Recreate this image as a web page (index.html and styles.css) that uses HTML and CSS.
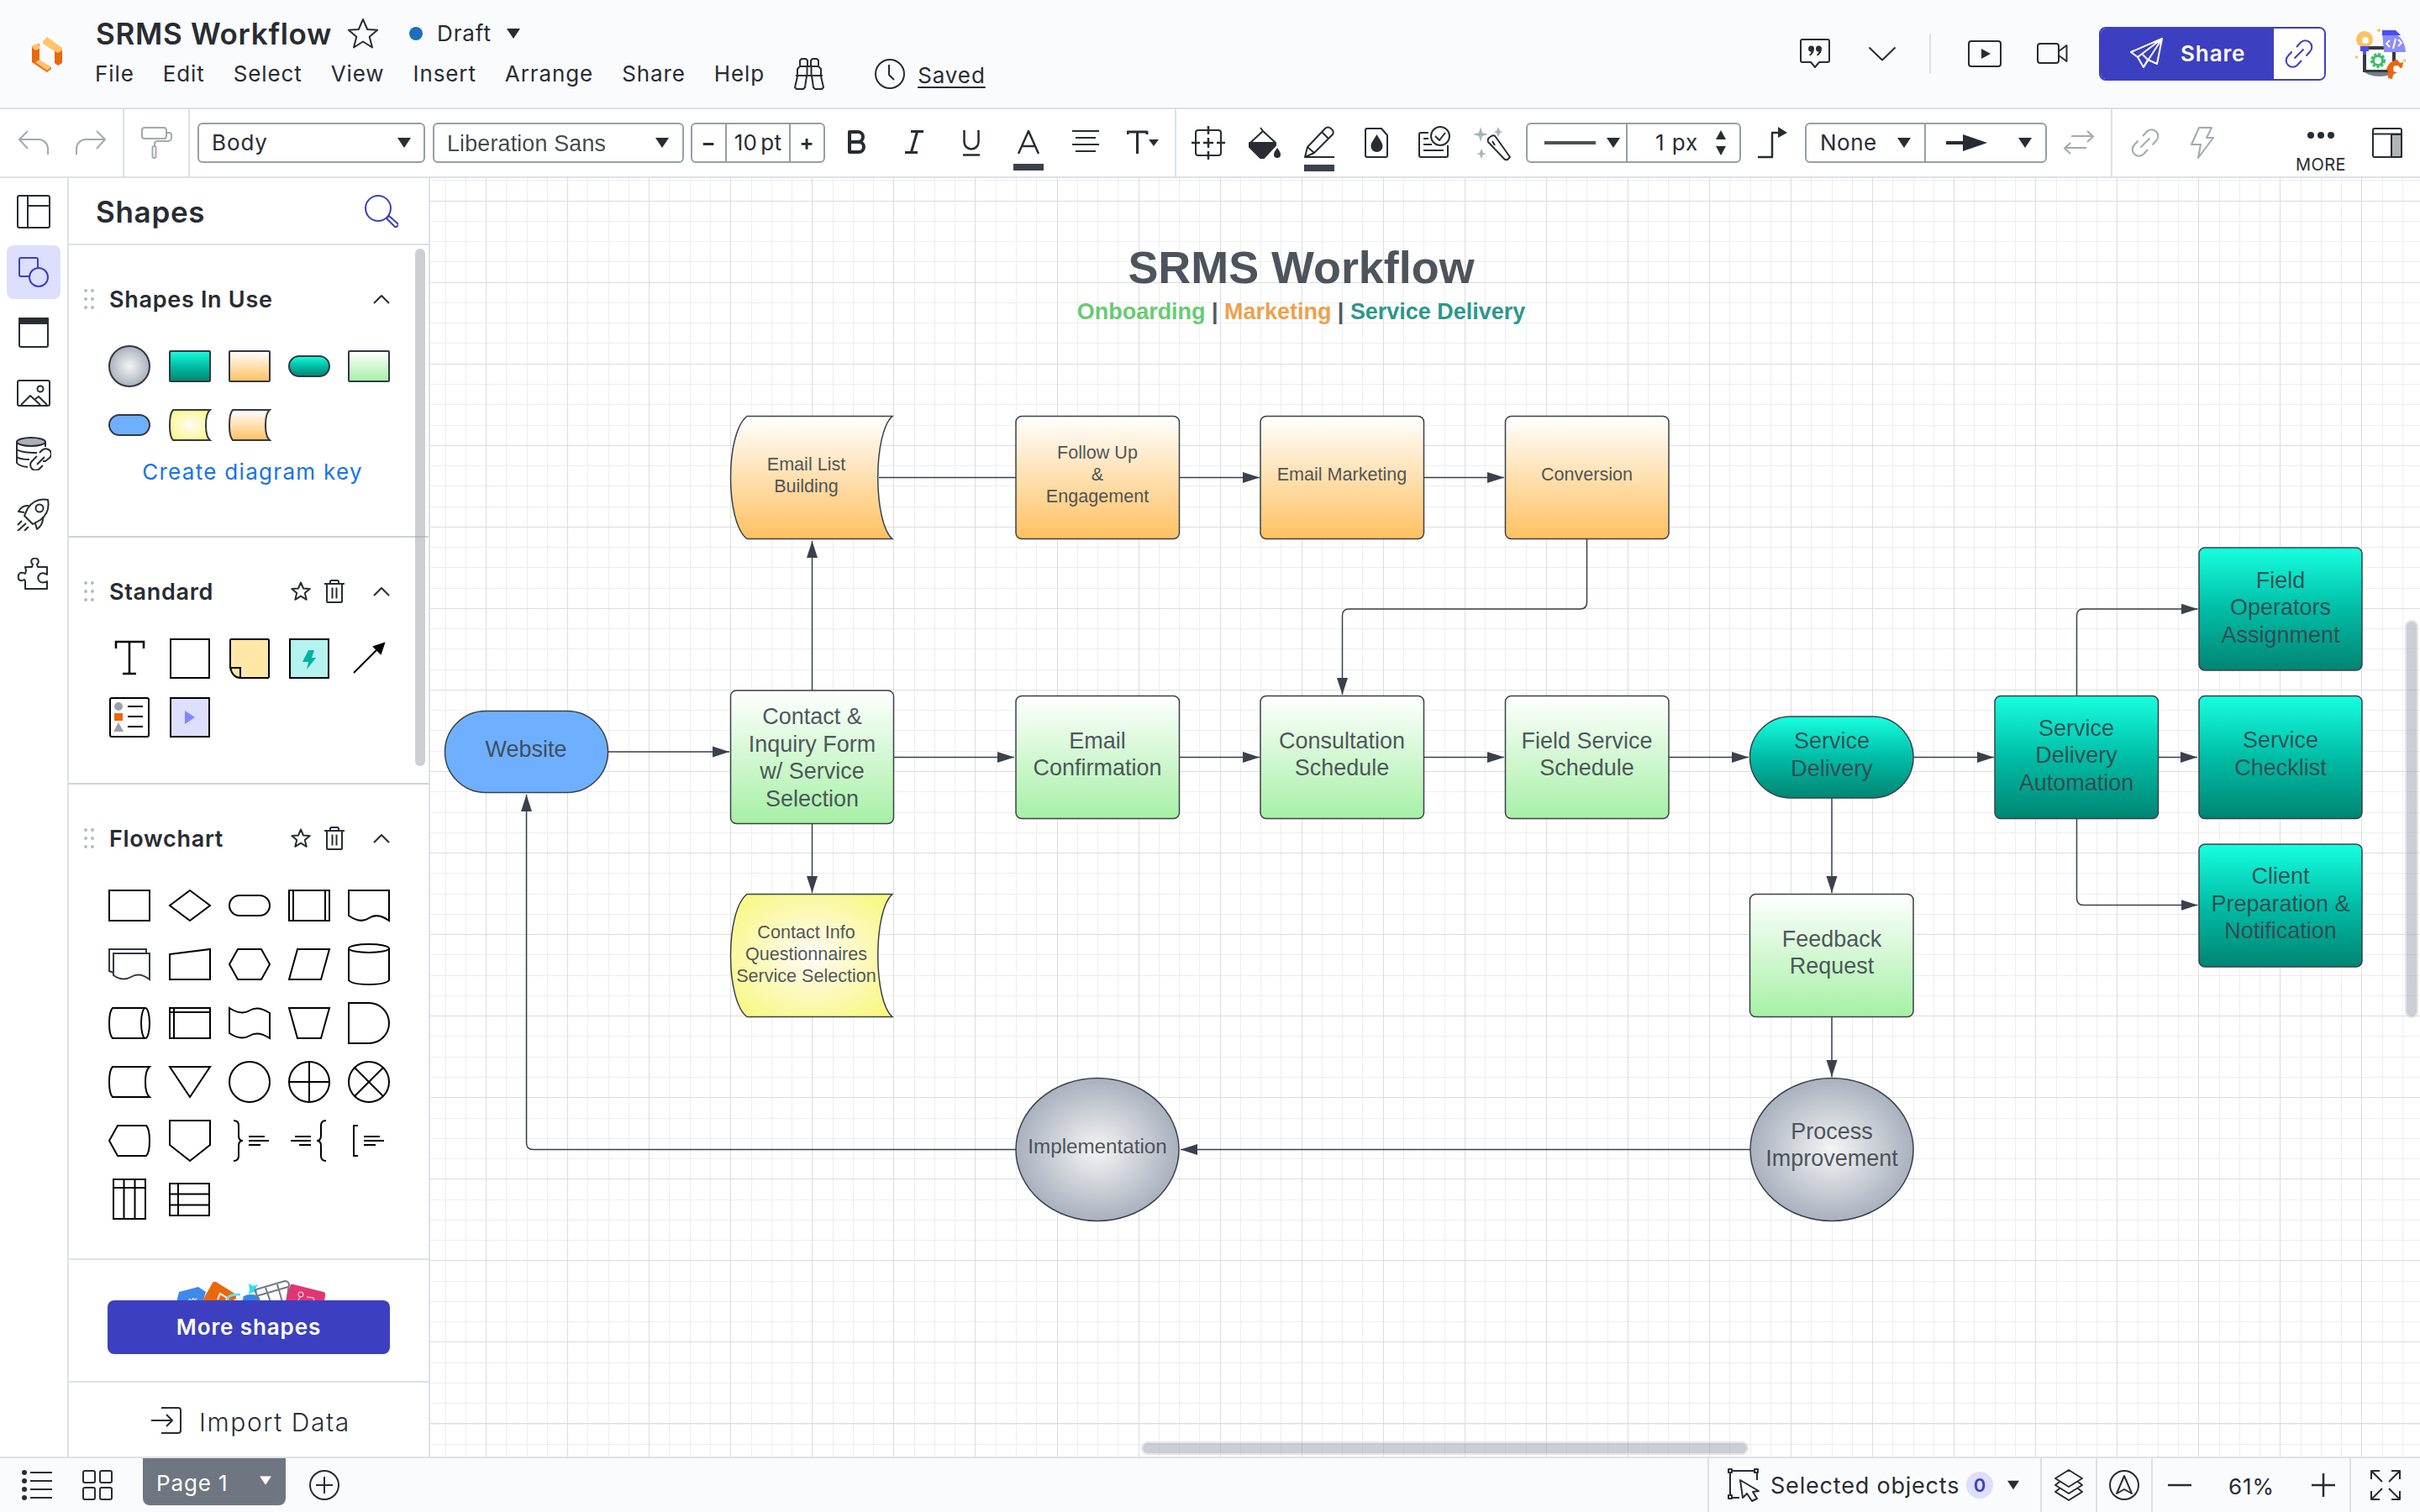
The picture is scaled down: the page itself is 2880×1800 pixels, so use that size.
FILE: index.html
```html
<!doctype html>
<html lang="en">
    <head>
        <meta charset="utf-8" />
        <title>SRMS Workflow</title>
        <link rel="stylesheet" href="styles.css">
    </head>
    <body>
        <svg class="defs" aria-hidden="true">
            <defs>
                <linearGradient id="orange" x1="0" y1="0" x2="0" y2="1"><stop offset="0" stop-color="#fff" /><stop offset="1" stop-color="#ffc160" /></linearGradient>
                <linearGradient id="green" x1="0" y1="0" x2="0" y2="1"><stop offset="0" stop-color="#fff" /><stop offset="1" stop-color="#a6f0a5" /></linearGradient>
                <linearGradient id="teal" x1="0" y1="0" x2="0" y2="1"><stop offset="0" stop-color="#17ffe0" /><stop offset="0.5" stop-color="#00bda6" /><stop offset="1" stop-color="#008573" /></linearGradient>
                <radialGradient id="gray"><stop offset="0" stop-color="#f4f4f4" /><stop offset="1" stop-color="#a9b1be" /></radialGradient>
                <radialGradient id="yellow" r="0.65"><stop offset="0" stop-color="#fff" /><stop offset="0.12" stop-color="#fffae8" /><stop offset="1" stop-color="#f8f880" /></radialGradient>
                <marker id="arrow" viewBox="0 0 20 14" markerWidth="20" markerHeight="14" refX="20" refY="7" orient="auto" markerUnits="userSpaceOnUse"><path d="M0 .5 20 7 0 13.5z" fill="#3a414a" /></marker>
            </defs>
            <symbol id="caret" viewBox="0 0 16 12"><path d="M0 0h16L8 12z" fill="currentColor" /></symbol>
            <symbol id="chevron" viewBox="0 0 20 12"><path d="M1 11 10 2l9 9" /></symbol>
            <symbol id="grip" viewBox="0 0 14 26"><g fill="#b4bac4" stroke="none"><circle cx="3" cy="3" r="2" /><circle cx="11" cy="3" r="2" /><circle cx="3" cy="13" r="2" /><circle cx="11" cy="13" r="2" /><circle cx="3" cy="23" r="2" /><circle cx="11" cy="23" r="2" /></g></symbol>
            <symbol id="star" viewBox="0 0 24 24"><path d="m12 1.5 3 7 7.700.6-5.900 5 1.900 7.700L12 17.700l-6.700 4.100 1.900-7.700-5.900-5L9 8.500z" /></symbol>
            <symbol id="trash" viewBox="0 0 24 28"><path d="M3 4.500V26a1 1 0 0 0 1 1h16a1 1 0 0 0 1-1V4.500M0 5h24M7 5V2.500A1.500 1.500 0 0 1 8.500 1h7A1.500 1.500 0 0 1 17 2.500V5M9.500 9.500v13M14.500 9.500v13" /></symbol>
            <symbol id="link" viewBox="0 0 34 34"><path d="m14 9 5-5.500a7.500 7.500 0 0 1 11 11L25.500 19.500M20 25l-5 5.500a7.500 7.500 0 0 1-11-11L8.500 14.500M11.500 22.500l11-11" /></symbol>
        </svg>

        <div class="app">
            <header class="header">
                <svg class="logo" width="36" height="42" viewBox="0 0 36 42">
                    <path d="M0 11 9 8v20l14 8v2l-5 4L0 30z" fill="#ea670c" />
                    <path d="M0 12 4 8l5 2v4l-5 2zM4 30l5-3 14 9-5 4z" fill="#ffc36b" />
                    <path d="M27 16v15l4 3 5-3V14z" fill="#ea670c" />
                    <path d="M13 5 18 0l18 13v3l-5 3-4-2-14-9z" fill="#ffc36b" />
                </svg>
                <div class="doc">
                    <div class="doc-title">
                        <h1>SRMS Workflow</h1>
                        <svg class="icon" width="38" height="38" viewBox="0 0 38 38"><path d="m19 2 5.200 12 12 .8-9.500 8 3.300 12.700L19 28.500 8 35.500l3.300-12.700-9.500-8 12-.8z" /></svg>
                        <span class="dot"></span>
                        <span class="status">Draft</span>
                        <svg width="16" height="12"><use href="#caret" /></svg>
                    </div>
                    <nav class="menu">
                        <span>File</span><span>Edit</span><span>Select</span><span>View</span><span>Insert</span><span>Arrange</span><span>Share</span><span>Help</span>
                        <svg class="icon binoculars" width="36" height="38" viewBox="0 0 36 38"><path d="M2 21h32M4 21v-8l3-3h22l3 3v8M7 9V3l2-2h5l2 2v6M20 9V3l2-2h5l2 2v6M15.500 10v11M20.500 10v11M4 22 1 35l2 2h8l2-2 2-14M32 22l3 13-2 2h-8l-2-2-2-14" /></svg>
                        <svg class="icon clock" width="36" height="36" viewBox="0 0 36 36"><circle cx="18" cy="18" r="17" /><path d="M17 7v12l6 6" /></svg>
                        <span class="saved">Saved</span>
                    </nav>
                </div>
                <div class="header-actions">
                    <svg class="icon" width="36" height="36" viewBox="0 0 36 36"><path d="M3 1h30a2 2 0 0 1 2 2v23a2 2 0 0 1-2 2H23l-5 6-5-6H3a2 2 0 0 1-2-2V3a2 2 0 0 1 2-2z" /><path d="M17 11.500c0 4-2 7.500-5 9l-1-1.500c1.500-1 2.300-2 2.500-3.500a3.500 3.500 0 1 1 3.500-4zM26 11.500c0 4-2 7.500-5 9l-1-1.500c1.500-1 2.300-2 2.500-3.500a3.500 3.500 0 1 1 3.500-4z" fill="#282c33" stroke="none" /></svg>
                    <svg class="icon chev" width="34" height="18" viewBox="0 0 34 18"><path d="m1.500 1.500 15.500 15 15.500-15" /></svg>
                    <span class="rule"></span>
                    <svg class="icon present" width="40" height="32" viewBox="0 0 40 32"><rect x="1" y="1" width="38" height="30" rx="3" /><path d="m16 10 11 6-11 6z" fill="#282c33" stroke="none" /></svg>
                    <svg class="icon video" width="37" height="26" viewBox="0 0 37 26"><rect x="1" y="1" width="25" height="23" rx="3" /><path d="m26 10 9.500-7v19L26 15" /></svg>
                    <div class="share">
                        <button class="share-btn">
                            <svg width="40" height="38" viewBox="0 0 40 38"><path d="M39 1 2 17l8 6zM39 1 10 23l7 12zM39 1 17 35l5-9 11 5zM22 26l-6-6" /></svg>
                            Share
                        </button>
                        <button class="share-link"><svg width="34" height="34"><use href="#link" /></svg></button>
                    </div>
                    <svg class="avatar" width="64" height="64" viewBox="0 0 64 64">
                        <path d="M11 52h40a22 12 0 0 1-40 0z" fill="#747d89" />
                        <path d="M11 23h39v31H11z" fill="#343a42" /><path d="M15 27h31v24H15z" fill="#fff" />
                        <path d="M34 6h9a20 26 0 0 1 19 24H36z" fill="#8b8cff" /><path d="M34 4h16l6 6H34z" fill="#4a4df0" />
                        <path d="m43 16-4 4 4 4M53 15l4 4-4 4M50 14l-3 12" fill="none" stroke="#fff" stroke-width="2" />
                        <circle cx="13" cy="15" r="10" fill="#ffc05d" /><path d="M8 23h10v6h-3v4h-4v-4H8z" fill="#4a4df0" /><circle cx="14" cy="16" r="4" fill="#fff" />
                        <circle cx="29" cy="40" r="7" fill="none" stroke="#3bbf63" stroke-width="4" stroke-dasharray="3 1.700" /><circle cx="29" cy="40" r="5.500" fill="none" stroke="#3bbf63" stroke-width="3" />
                        <path d="M41 61v-8l-2-2c2-8 7-11 13-12l3 4 4-1-1 6-6 3v3l-5 3-1 5z" fill="#ec640e" /><circle cx="51" cy="50" r="4" fill="#fff" />
                        <path d="M28 4h4M2 36h3M59 40h3" stroke="#ffc05d" stroke-width="3" />
                    </svg>
                </div>
            </header>

            <div class="toolbar">
                <div class="tb-group history">
                    <svg class="icon muted" width="36" height="30" viewBox="0 0 36 30"><path d="M11 1 1 11l10 11M1 11h23a11 11 0 0 1 11 11v7" /></svg>
                    <svg class="icon muted" width="36" height="30" viewBox="0 0 36 30"><path d="m25 1 10 10-10 11M35 11H12A11 11 0 0 0 1 22v7" /></svg>
                </div>
                <div class="tb-group painter">
                    <svg class="icon muted" width="38" height="38" viewBox="0 0 38 38"><rect x="1" y="1" width="29" height="13" rx="3" /><path d="M30 7h3a3 3 0 0 1 3 3v3a4 4 0 0 1-4 4H19a3 3 0 0 0-3 3v3" /><rect x="13.500" y="23" width="4" height="14" rx="2" /></svg>
                </div>
                <div class="tb-group text-tools">
                    <div class="select style-select">Body<svg width="16" height="12"><use href="#caret" /></svg></div>
                    <div class="select font-select"><span>Liberation Sans</span><svg width="16" height="12"><use href="#caret" /></svg></div>
                    <div class="select size-select"><b>−</b><span>10 pt</span><b>+</b></div>
                    <div class="format-cells">
                        <span><svg class="icon thick" width="24" height="30" viewBox="0 0 24 30"><path d="M3 3h10a5.500 5.500 0 0 1 0 12H3zM3 15h11a6 6 0 0 1 0 12H3z" stroke-width="4" /></svg></span>
                        <span><svg class="icon" width="22" height="30" viewBox="0 0 22 30"><path d="M7 2.500h15M0 27.500h15M14.500 3l-7 24" stroke-width="3" /></svg></span>
                        <span><svg class="icon" width="20" height="32" viewBox="0 0 20 32"><path d="M1.500 1v14a8.500 8.500 0 0 0 17 0V1M0 30.500h20" stroke-width="2.500" /></svg></span>
                        <span class="inked"><svg class="icon" width="26" height="30" viewBox="0 0 26 30"><path d="M1 29 13 2l12 27M5.500 20h15" stroke-width="2.500" /></svg></span>
                        <span><svg class="icon" width="32" height="28" viewBox="0 0 32 28"><path d="M0 2h32M4 10h24M0 18h32M4 26h24" /></svg></span>
                        <span><svg class="icon" width="38" height="30" viewBox="0 0 38 30"><path d="M1 6V3h23v3M12.500 3v26" stroke-width="3" /><path d="M26 12h12l-6 8z" fill="#282c33" stroke="none" /></svg></span>
                    </div>
                </div>
                <div class="tb-group shape-tools">
                    <svg class="icon" width="40" height="40" viewBox="0 0 40 40"><rect x="5" y="5" width="30" height="30" rx="3" /><path d="M20 0v10M20 30v10M0 20h10M30 20h10M20 14v12M14 20h12" stroke-width="2.500" /></svg>
                    <svg class="icon" width="40" height="40" viewBox="0 0 40 40"><path d="m15 2 3 4M18 6 33 20M18 6 3 20" /><path d="M2 20h31v3L19 38h-4L2 25z" fill="#282c33" /><path d="M35 26c3 4 4 6 4 8a4 4 0 0 1-8 0c0-2 1-4 4-8z" fill="#282c33" stroke="none" /></svg>
                    <svg class="icon" width="40" height="40" viewBox="0 0 40 40"><path d="m1 37 3-12L25 3q3-3 7 0t2 7L12 32zM21 7l8 8M4 25l8 7M1 37h35" /></svg>
                    <svg class="icon" width="40" height="40" viewBox="0 0 40 40"><path d="M8 3h17l7 8v24a2 2 0 0 1-2 2H8a2 2 0 0 1-2-2V5a2 2 0 0 1 2-2z" /><path d="M19.500 10c4 7 7 10 7 14a7 7 0 0 1-14 0c0-4 3-7 7-14z" fill="#282c33" stroke="none" /></svg>
                    <svg class="icon" width="40" height="40" viewBox="0 0 40 40"><path d="M14 8H5a2 2 0 0 0-2 2v25a2 2 0 0 0 2 2h30a2 2 0 0 0 2-2V23M8 15h6M8 22h10M8 29h24" /><circle cx="28" cy="12" r="11" /><path d="m22 12 5 5 7-9" /></svg>
                    <svg class="icon" width="46" height="44" viewBox="0 0 46 44"><path d="m19 16 3-2q3-2 5 1l17 24-3 3q-2 1-4-1L18 21q-1-3 1-5zM23 20l3 5" /><path d="M9 3l2 7 7 2-7 2-2 7-2-7-7-2 7-2zM30 3l2 5 4 1-4 1-2 5-2-5-4-1 4-1zM10 29l2 5 4 1-4 1-2 5-2-5-4-1 4-1z" fill="#aab2b4" stroke="none" /></svg>
                    <div class="select line-select">
                        <span class="line-style"><i></i><svg width="16" height="12"><use href="#caret" /></svg></span>
                        <span class="line-width">1 px<svg width="12" height="30" viewBox="0 0 12 30"><path d="M0 11 6 0l6 11zM0 19l6 11 6-11z" fill="#282c33" /></svg></span>
                    </div>
                    <svg class="icon elbow" width="36" height="38" viewBox="0 0 36 38"><path d="M0 36h17V7h8" stroke-width="2.500" /><path d="m24 0 11 7-11 6z" fill="#282c33" stroke="none" /></svg>
                    <div class="select ends-select">
                        <span class="end-start">None<svg width="16" height="12"><use href="#caret" /></svg></span>
                        <span class="end-finish"><svg width="50" height="22" viewBox="0 0 50 22"><path d="M0 9h20V1l29 10-29 10v-8H0z" fill="#282c33" /></svg><svg width="16" height="12"><use href="#caret" /></svg></span>
                    </div>
                    <svg class="icon muted swap" width="36" height="30" viewBox="0 0 36 30"><path d="M9 7h26M28 1l7 6.500-7 6.500M27 21H1M8 15l-7 6.500L8 28" /></svg>
                </div>
                <div class="tb-group link-tools">
                    <svg class="icon muted" width="34" height="34"><use href="#link" /></svg>
                    <svg class="icon muted" width="28" height="38" viewBox="0 0 28 38"><path d="M10 1h15l-6 12h8L9 37l3-16H1z" /></svg>
                </div>
                <div class="more">
                    <svg width="32" height="8" viewBox="0 0 32 8"><g fill="#282c33"><circle cx="4" cy="4" r="4" /><circle cx="16" cy="4" r="4" /><circle cx="28" cy="4" r="4" /></g></svg>
                    MORE
                </div>
                <svg class="icon" width="36" height="36" viewBox="0 0 36 36"><path d="M23 8h12v27H23z" fill="#b0b5b6" /><rect x="1" y="1" width="34" height="34" rx="2" /><path d="M1 7.500h34M23 7v28" /></svg>
            </div>

            <div class="workspace">
                <aside class="rail">
                    <span><svg class="icon" width="40" height="40" viewBox="0 0 40 40"><rect x="1" y="1" width="38" height="38" rx="2" /><path d="M13 1v38M13 13h26" /></svg></span>
                    <span class="active"><svg class="icon" width="40" height="40" viewBox="0 0 40 40"><path d="M15 25H5a2 2 0 0 1-2-2V5a2 2 0 0 1 2-2h18a2 2 0 0 1 2 2v9" /><circle cx="26" cy="26" r="11" /></svg></span>
                    <span><svg class="icon" width="40" height="40" viewBox="0 0 40 40"><rect x="3" y="3" width="34" height="34" rx="2" /><path d="M3 3h34v6H3z" fill="#282c33" /></svg></span>
                    <span><svg class="icon" width="40" height="40" viewBox="0 0 40 40"><rect x="1" y="5" width="38" height="30" rx="2" /><circle cx="28" cy="15" r="3.500" /><path d="m5 34 11-11 12 11M22 27l4-3 10 10" /></svg></span>
                    <span><svg class="icon" width="42" height="40" viewBox="0 0 42 40"><ellipse cx="18" cy="6" rx="17" ry="5" fill="#aab2b4" /><path d="M1 6v25q3 4 13 5M35 6v6M1 15q5 4 24 4M1 24q4 3 15 3M28 19l3-3a6 6 0 0 1 9 9l-5 4h-3M25 23l-6 6a6 6 0 0 0 9 9l4-4M25 33l9-9" /></svg></span>
                    <span><svg class="icon" width="40" height="40" viewBox="0 0 40 40"><path d="M37 3q-15-3-24 10l-4 9 10 10 9-5Q40 18 37 3z" /><circle cx="27" cy="13" r="4.500" /><path d="M14 10Q6 9 2 17l7 1M31 23q1 9-7 15l-2-7M6 28l-5 5M11 31l-10 9M14 35l-5 5" /></svg></span>
                    <span><svg class="icon" width="40" height="40" viewBox="0 0 40 40"><path d="M10 11h8l1-3q-3-3-1-6 4-3 7 0 2 3-1 6l1 3h11v9q-4-3-8-1-5 4-1 9 4 3 9 0v9H10v-9l-1-2q-5 3-7-1-1-5 2-7 3-1 6 1l1-4z" /></svg></span>
                </aside>

                <aside class="panel">
                    <div class="panel-head">
                        <h2>Shapes</h2>
                        <svg class="icon search" width="40" height="40" viewBox="0 0 40 40"><circle cx="16" cy="16" r="15" /><path d="m26 28 10 10q1 1 3-1t0-3L29 25z" /></svg>
                    </div>
                    <div class="scroll">
                        <section class="lib in-use">
                            <div class="lib-head"><svg width="14" height="26"><use href="#grip" /></svg><h3>Shapes In Use</h3><svg class="icon" width="20" height="12"><use href="#chevron" /></svg></div>
                            <div class="shape-grid used">
                                <svg viewBox="-26 -26 52 52"><circle r="24" fill="url(#gray)" /></svg>
                                <svg viewBox="-26 -26 52 52"><rect x="-24" y="-18" width="48" height="36" rx="1" fill="url(#teal)" /></svg>
                                <svg viewBox="-26 -26 52 52"><rect x="-24" y="-18" width="48" height="36" rx="1" fill="url(#orange)" /></svg>
                                <svg viewBox="-26 -26 52 52"><rect x="-24" y="-12" width="48" height="24" rx="12" fill="url(#teal)" /></svg>
                                <svg viewBox="-26 -26 52 52"><rect x="-24" y="-18" width="48" height="36" rx="1" fill="url(#green)" /></svg>
                                <svg viewBox="-26 -26 52 52"><rect x="-24" y="-12" width="48" height="24" rx="12" fill="#6eb0ff" /></svg>
                                <svg viewBox="-26 -26 52 52"><path d="M24-18h-44q-4 4-4 18t4 18h44q-5-4-5-18t5-18z" fill="url(#yellow)" /></svg>
                                <svg viewBox="-26 -26 52 52"><path d="M24-18h-44q-4 4-4 18t4 18h44q-5-4-5-18t5-18z" fill="url(#orange)" /></svg>
                            </div>
                            <a class="diagram-key">Create diagram key</a>
                        </section>
                        <section class="lib standard">
                            <div class="lib-head"><svg width="14" height="26"><use href="#grip" /></svg><h3>Standard</h3><svg class="icon" width="24" height="24"><use href="#star" /></svg><svg class="icon trash" width="24" height="28"><use href="#trash" /></svg><svg class="icon" width="20" height="12"><use href="#chevron" /></svg></div>
                            <div class="shape-grid">
                                <svg viewBox="-26 -26 52 52"><path d="M-16-12v-8h33v8M0-20v38M-8 18H8" stroke-width="2.500" /></svg>
                                <svg viewBox="-26 -26 52 52"><rect x="-23" y="-23" width="46" height="46" /></svg>
                                <svg viewBox="-26 -26 52 52"><path d="M-23 11v-33l1-1h44l1 1v44l-1 1h-33q-9 0-12-12zM-22 11h11v12" fill="#ffe7a8" /></svg>
                                <svg viewBox="-26 -26 52 52"><rect x="-23" y="-23" width="46" height="46" fill="#b4f3ef" /><path d="M-1-10h7L3-1h5L-3 13l2-9h-7z" fill="#00b3a0" stroke="none" /></svg>
                                <svg viewBox="-26 -26 52 52"><path d="m-18 17 30-30" /><path d="m18-18-12 4 8 8z" fill="#000" /></svg>
                                <svg viewBox="-26 -26 52 52"><rect x="-23" y="-23" width="46" height="46" rx="2" /><path d="M-2-13h18M-2-1h18M-2 11h18" /><g stroke="none" fill="#9aa0aa"><circle cx="-13" cy="-13" r="5" /><path d="m-13 6 6 11h-12z" /><path d="M-18-5h10v9h-10z" fill="#ea670c" /></g></svg>
                                <svg viewBox="-26 -26 52 52"><rect x="-23" y="-23" width="46" height="46" fill="#dedeff" /><path d="M-6-8 6 0-6 8z" fill="#8585ff" stroke="none" /></svg>
                            </div>
                        </section>
                        <section class="lib flowchart">
                            <div class="lib-head"><svg width="14" height="26"><use href="#grip" /></svg><h3>Flowchart</h3><svg class="icon" width="24" height="24"><use href="#star" /></svg><svg class="icon trash" width="24" height="28"><use href="#trash" /></svg><svg class="icon" width="20" height="12"><use href="#chevron" /></svg></div>
                            <div class="shape-grid">
                                <svg viewBox="-26 -26 52 52"><rect x="-24" y="-18" width="48" height="36" /></svg>
                                <svg viewBox="-26 -26 52 52"><path d="M0-18 24 0 0 18-24 0z" /></svg>
                                <svg viewBox="-26 -26 52 52"><rect x="-24" y="-12" width="48" height="24" rx="12" /></svg>
                                <svg viewBox="-26 -26 52 52"><rect x="-24" y="-18" width="48" height="36" /><path d="M-19-18v36M19-18v36" /></svg>
                                <svg viewBox="-26 -26 52 52"><path d="M-24 12v-30h48v36q-14-10-24-3t-24-3z" /></svg>
                                <svg viewBox="-26 -26 52 52" class="stacked"><path d="M-19 10l-5-2v-26h44v5" /><path d="M-19 13v-26h43v31q-12-9-22-3t-21-2z" /></svg>
                                <svg viewBox="-26 -26 52 52"><path d="M-24-12 24-18v36h-48z" /></svg>
                                <svg viewBox="-26 -26 52 52"><path d="M-24 0l10-18h28L24 0 14 18h-28z" /></svg>
                                <svg viewBox="-26 -26 52 52"><path d="M-14-18h38l-10 36h-38z" /></svg>
                                <svg viewBox="-26 -26 52 52"><ellipse cy="-19" rx="24" ry="5" /><path d="M-24-19v38q4 5 24 5t24-5v-38" /></svg>
                                <svg viewBox="-26 -26 52 52"><path d="M19-18h-39q-4 4-4 18t4 18h39" /><ellipse cx="19" rx="5" ry="18" /></svg>
                                <svg viewBox="-26 -26 52 52"><rect x="-24" y="-18" width="48" height="36" /><path d="M-24-13h48M-19-18v36" /></svg>
                                <svg viewBox="-26 -26 52 52"><path d="M-24-18q14 9 24 3t24 3v30q-14-9-24-3t-24-3z" /></svg>
                                <svg viewBox="-26 -26 52 52"><path d="M-24-18h48l-10 36h-28z" /></svg>
                                <svg viewBox="-26 -26 52 52"><path d="M-24-24H0a24 24 0 0 1 0 48h-24z" /></svg>
                                <svg viewBox="-26 -26 52 52"><path d="M24-18h-44q-4 4-4 18t4 18h44q-5-4-5-18t5-18z" /></svg>
                                <svg viewBox="-26 -26 52 52"><path d="M-24-18h48L0 18z" /></svg>
                                <svg viewBox="-26 -26 52 52"><circle r="24" /></svg>
                                <svg viewBox="-26 -26 52 52"><circle r="24" /><path d="M-24 0h48M0-24v48" /></svg>
                                <svg viewBox="-26 -26 52 52"><circle r="24" /><path d="m-17-17 34 34M17-17l-34 34" /></svg>
                                <svg viewBox="-26 -26 52 52"><path d="M-24 0l10-18h34q4 4 4 18t-4 18h-34z" /></svg>
                                <svg viewBox="-26 -26 52 52"><path d="M-24-24h48V5L0 24-24 5z" /></svg>
                                <svg viewBox="-26 -26 52 52"><path d="M-19-24q6 0 6 6v12q0 6 5 6-5 0-5 6v12q0 6-6 6M-1-5h19M-1 0h24M-1 5h14" /></svg>
                                <svg viewBox="-26 -26 52 52"><path d="M20-24q-6 0-6 6v12q0 6-5 6 5 0 5 6v12q0 6 6 6M2-5h-19M2 0h-24M2 5h-14" /></svg>
                                <svg viewBox="-26 -26 52 52"><path d="M-13-18h-5v36h5M-6-5h19M-6 0h24M-6 5H8" /></svg>
                                <svg viewBox="-26 -26 52 52"><path d="M-19-24h38v47h-38zM-19-14h38M-6.500-24v47M6.500-24v47" /></svg>
                                <svg viewBox="-26 -26 52 52"><path d="M-24-19h47v38h-47zM-14-19v38M-24-6.500h47M-24 6.500h47" /></svg>
                            </div>
                        </section>
                        <span class="scroll-thumb"></span>
                    </div>
                    <div class="more-shapes">
                        <svg width="180" height="26" viewBox="0 0 180 26">
                            <path d="m0 26 3-12 23-6 9 6-4 12z" fill="#3f88ee" /><path d="m14 25 2-3 2 3 2-4 2 4 2-4" stroke="#fff" fill="none" />
                            <path d="M30 26 43 3q2-2 4-1l24 15v9z" fill="#ea670c" /><path d="m49 23 3-7 8 5-1 5" stroke="#fff" stroke-width="2" fill="none" />
                            <path d="M61 26v-5q2-4 15-4" stroke="#6bdcf5" stroke-width="3" fill="none" /><path d="M75 26q2-9 14-9t10 9z" fill="#3587e5" /><path d="M66 26q5-7 14-6l-2 6z" fill="#f0eef0" />
                            <path d="m86 4 5 3 6-2-3 5 3 5-6-1-5 3 1-6z" fill="#29e0ef" />
                            <path d="M99 26 94 14q-1-3 1-3l34-10q4 0 5 4l-3 21M95 19l38-11M106 9l6 17M120 5l6 21" stroke="#747b83" stroke-width="2" fill="none" />
                            <path d="m130 26 5-19q1-3 4-2l36 9q3 1 2 4l-1 8z" fill="#e23576" /><circle cx="148" cy="17" r="3" stroke="#fff" fill="none" /><path d="m147 20-3 6M155 20l8 1 1 5" stroke="#fff" fill="none" />
                        </svg>
                        <button>More shapes</button>
                    </div>
                    <div class="import">
                        <svg class="icon" width="38" height="32" viewBox="0 0 38 32"><path d="M12 1h20a3 3 0 0 1 3 3v24a3 3 0 0 1-3 3H12M0 16h25M18 9l7 7-7 7" /></svg>
                        <span>Import Data</span>
                    </div>
                </aside>

                <main class="canvas">
                    <svg class="diagram" width="2368" height="1522" viewBox="512 212 2368 1522">
                        <g class="edges">
                            <path d="M1046 568.500h163" />
                            <g marker-end="url(#arrow)">
                                <path d="M1403 568.500h96" /><path d="M1694 568.500h96" />
                                <path d="M966.500 822V644" /><path d="M966.500 981v82" />
                                <path d="M724 895h144" />
                                <path d="M1064 901.500h143" /><path d="M1403 901.500h96" /><path d="M1694 901.500h96" /><path d="M1986 901.500h95" /><path d="M2277 901.500h96" /><path d="M2568 901.500h47" />
                                <path d="M1888.500 641v76q0 8-8 8h-275q-8 0-8 8v94" />
                                <path d="M2471.500 828v-95q0-8 8-8h136" />
                                <path d="M2471.500 974v95q0 8.500 8 8.500h136" />
                                <path d="M2180 950v113" /><path d="M2180 1210v72" />
                                <path d="M2083 1368.500h-678" />
                                <path d="M1209 1368.500H634.500q-8 0-8-8V946" />
                            </g>
                        </g>
                        <g class="nodes">
                            <g fill="url(#orange)">
                                <path d="M1062 495.500H889c-26 20-26 126 0 146h173c-23-20-23-126 0-146z" />
                                <rect x="1209" y="495.500" width="194.500" height="146" rx="7" />
                                <rect x="1500" y="495.500" width="194.500" height="146" rx="7" />
                                <rect x="1791.500" y="495.500" width="194.500" height="146" rx="7" />
                            </g>
                            <g fill="url(#green)">
                                <rect x="869.500" y="822" width="194" height="158.500" rx="7" />
                                <rect x="1209" y="828.500" width="194.500" height="146" rx="7" />
                                <rect x="1500" y="828.500" width="194.500" height="146" rx="7" />
                                <rect x="1791.500" y="828.500" width="194.500" height="146" rx="7" />
                                <rect x="2082.500" y="1064.500" width="194.500" height="146" rx="7" />
                            </g>
                            <g fill="url(#teal)">
                                <rect x="2082.500" y="853" width="194.500" height="97" rx="48.500" />
                                <rect x="2374" y="828.500" width="194.500" height="146" rx="7" />
                                <rect x="2617" y="652" width="194" height="146" rx="7" />
                                <rect x="2617" y="828.500" width="194" height="146" rx="7" />
                                <rect x="2617" y="1005" width="194" height="146" rx="7" />
                            </g>
                            <rect x="529.500" y="846.500" width="194" height="97" rx="48.500" fill="#6eb0ff" />
                            <path d="M1062 1064.500H889c-26 20-26 126 0 146h173c-23-20-23-126 0-146z" fill="url(#yellow)" />
                            <ellipse cx="1306" cy="1368.500" rx="97" ry="85" fill="url(#gray)" />
                            <ellipse cx="2180" cy="1368.500" rx="97" ry="85" fill="url(#gray)" />
                        </g>
                        <g class="labels">
                            <text class="heading" x="1548.500" y="337">SRMS Workflow</text>
                            <text class="legend" x="1548.500" y="380"><tspan fill="#54c45e">Onboarding</tspan> | <tspan fill="#ec9431">Marketing</tspan> | <tspan fill="#0d8a7a">Service Delivery</tspan></text>
                            <g class="small">
                                <text x="959.500" y="560">Email List</text><text x="959.500" y="586">Building</text>
                                <text x="1306" y="545.500">Follow Up</text><text x="1306" y="571.500">&amp;</text><text x="1306" y="597.500">Engagement</text>
                                <text x="1597" y="571.500">Email Marketing</text>
                                <text x="1888.500" y="571.500">Conversion</text>
                                <text x="959.500" y="1117">Contact Info</text><text x="959.500" y="1143">Questionnaires</text><text x="959.500" y="1169">Service Selection</text>
                            </g>
                            <text x="626" y="901">Website</text>
                            <text x="966.500" y="862">Contact &amp;</text><text x="966.500" y="894.500">Inquiry Form</text><text x="966.500" y="927">w/ Service</text><text x="966.500" y="959.500">Selection</text>
                            <text x="1306" y="890.500">Email</text><text x="1306" y="922.500">Confirmation</text>
                            <text x="1597" y="890.500">Consultation</text><text x="1597" y="922.500">Schedule</text>
                            <text x="1888.500" y="890.500">Field Service</text><text x="1888.500" y="922.500">Schedule</text>
                            <text x="2180" y="891">Service</text><text x="2180" y="923.500">Delivery</text>
                            <text x="2471" y="875.500">Service</text><text x="2471" y="908">Delivery</text><text x="2471" y="940.500">Automation</text>
                            <text x="2714" y="699.500">Field</text><text x="2714" y="732">Operators</text><text x="2714" y="764.500">Assignment</text>
                            <text x="2714" y="890">Service</text><text x="2714" y="922.500">Checklist</text>
                            <text x="2714" y="1052">Client</text><text x="2714" y="1084.500">Preparation &amp;</text><text x="2714" y="1117">Notification</text>
                            <text x="2180" y="1126.500">Feedback</text><text x="2180" y="1159">Request</text>
                            <text class="medium" x="1306" y="1373">Implementation</text>
                            <text x="2180" y="1355.500">Process</text><text x="2180" y="1388">Improvement</text>
                        </g>
                    </svg>
                    <span class="thumb-v"></span>
                    <span class="thumb-h"></span>
                </main>
            </div>

            <footer class="footer">
                <svg class="icon list" width="36" height="36" viewBox="0 0 36 36"><path d="M10 3h26M10 13h26M10 23h26M10 33h26" /><g fill="#282c33" stroke="none"><circle cx="3" cy="3" r="3" /><circle cx="3" cy="13" r="3" /><circle cx="3" cy="23" r="3" /><circle cx="3" cy="33" r="3" /></g></svg>
                <svg class="icon tiles" width="36" height="36" viewBox="0 0 36 36"><rect x="1" y="1" width="14" height="14" rx="2" /><rect x="21" y="1" width="14" height="14" rx="2" /><rect x="1" y="21" width="14" height="14" rx="2" /><rect x="21" y="21" width="14" height="14" rx="2" /></svg>
                <div class="page-tab">Page 1<svg width="14" height="11" viewBox="0 0 16 12"><use href="#caret" /></svg></div>
                <svg class="icon" width="36" height="36" viewBox="0 0 36 36"><circle cx="18" cy="18" r="17" /><path d="M8 18h20M18 8v20" /></svg>
                <div class="status-bar">
                    <div class="selected">
                        <svg class="icon" width="40" height="40" viewBox="0 0 40 40"><path d="M5 3h28M3 5v28M35 6v8M5 35h9" /><rect x="1" y="1" width="4" height="4" /><rect x="32" y="1" width="4" height="4" /><rect x="1" y="32" width="4" height="4" /><path d="m15 14 3 21 5-5 6 9 6-3-5-8 7-1z" /></svg>
                        <span>Selected objects</span><em>0</em>
                        <svg width="14" height="12"><use href="#caret" /></svg>
                    </div>
                    <div class="cell"><svg class="icon" width="38" height="38" viewBox="0 0 38 38"><path d="M19 1 35 11 19 21 3 11zM8 15l-5 4 16 10 16-10-5-4M8 23l-5 4 16 10 16-10-5-4" /></svg></div>
                    <div class="cell"><svg class="icon" width="36" height="36" viewBox="0 0 36 36"><circle cx="18" cy="18" r="17" /><path d="m18 7 9 21-9-5-9 5z" /></svg></div>
                    <div class="zoom">
                        <svg class="icon" width="28" height="28" viewBox="0 0 28 28"><path d="M0 14h28" stroke-width="2.500" /></svg>
                        <span>61%</span>
                        <svg class="icon" width="28" height="28" viewBox="0 0 28 28"><path d="M0 14h28M14 0v28" stroke-width="2.500" /></svg>
                    </div>
                    <svg class="icon" width="38" height="38" viewBox="0 0 38 38"><path d="M2 12V2h10M26 2h10v10M36 26v10H26M12 36H2V26M2 2l13 13M36 2 23 15M36 36 23 23M2 36l13-13" /></svg>
                </div>
            </footer>
        </div>
    </body>
</html>
```
FILE: styles.css
```css
* {
    box-sizing: border-box;
}

body {
    margin: 0;
    background: #fff;
    color: #282c33;
    font-family: Inter, "Liberation Sans", sans-serif;
    font-size: 26px;
    letter-spacing: 0.9px;
    line-height: 1;
}

h1,
h2,
h3 {
    margin: 0;
    font-weight: 600;
}

button {
    font: inherit;
    letter-spacing: inherit;
    border: none;
    padding: 0;
}

svg {
    flex: none;
    display: block;
}

.defs {
    position: absolute;
    width: 0;
    height: 0;
}

.icon {
    fill: none;
    stroke: #282c33;
    stroke-width: 2;
    stroke-linejoin: round;
}

.icon.muted {
    stroke: #a3a9ac;
}

.app {
    width: 2880px;
    height: 1800px;
    display: flex;
    flex-direction: column;
    overflow: hidden;
}

/* Header */
.header {
    display: flex;
    height: 130px;
    flex: none;
    background: #fafbfd;
    border-bottom: 2px solid #dde1e6;
}

.logo {
    margin: 44px 39px 0 38px;
}

.doc {
    padding-top: 16px;
}

.doc-title,
.menu {
    display: flex;
    align-items: center;
    height: 48px;
    white-space: nowrap;
}

.doc-title h1 {
    width: 300px;
    padding: 1px 0 0 1px;
    font-size: 35px;
    letter-spacing: 0.7px;
}

.dot {
    width: 16px;
    height: 16px;
    margin: 0 17px 0 36px;
    border-radius: 50%;
    background: #1f6fb8;
}

.status {
    width: 83px;
}

.menu {
    gap: 34px;
}

.binoculars {
    margin-left: 1px;
}

.clock {
    margin-left: 26px;
}

.saved {
    margin: 3px 0 0 -19px;
    text-decoration: underline;
    text-underline-offset: 4px;
    text-decoration-thickness: 2px;
}

.header-actions {
    display: flex;
    align-items: center;
    margin-left: auto;
    padding-right: 15px;
}

.chev {
    margin: 0 39px 0 45px;
}

.rule {
    width: 2px;
    height: 48px;
    background: #dde1e6;
}

.present {
    margin: 0 42px 0 44px;
}

.share {
    display: flex;
    width: 270px;
    height: 64px;
    margin: 0 33px 0 37px;
    border: 2px solid #3c40c0;
    border-radius: 8px;
    overflow: hidden;
}

.share-btn {
    display: flex;
    align-items: center;
    gap: 21px;
    width: 206px;
    padding-left: 34px;
    background: #3c40c0;
    color: #fff;
    font-weight: 600;
}

.share-btn svg,
.share-link svg {
    fill: none;
    stroke: #fff;
    stroke-width: 2;
    stroke-linejoin: round;
}

.share-link {
    display: grid;
    place-items: center;
    flex: 1;
    background: #fff;
}

.share-link svg {
    stroke: #3c40c0;
}

/* Toolbar */
.toolbar {
    display: flex;
    align-items: center;
    height: 82px;
    flex: none;
    border-bottom: 2px solid #dde1e6;
}

.tb-group {
    display: flex;
    align-items: center;
    height: 100%;
    border-right: 2px solid #dde1e6;
}

.history {
    width: 148px;
    padding-left: 22px;
    gap: 32px;
}

.painter {
    width: 78px;
    padding-left: 20px;
}

.text-tools {
    width: 1174px;
    padding-left: 9px;
}

.select {
    display: flex;
    align-items: center;
    height: 48px;
    border: 2px solid #979ea8;
    border-radius: 6px;
    white-space: nowrap;
}

.style-select,
.font-select {
    justify-content: space-between;
    padding: 0 15px;
}

.style-select {
    width: 271px;
}

.font-select {
    width: 299px;
    margin: 0 8px 0 9px;
    padding-right: 16px;
}

.font-select span {
    padding-top: 2px;
    font: 27px "Liberation Sans", sans-serif;
    letter-spacing: 0.1px;
    color: #434a51;
    filter: blur(0.7px);
}

.size-select {
    width: 160px;
}

.size-select b {
    width: 39px;
    font-weight: 600;
    text-align: center;
}

.size-select span {
    flex: 1;
    height: 44px;
    line-height: 44px;
    border-left: 2px solid #979ea8;
    border-right: 2px solid #979ea8;
    text-align: center;
    letter-spacing: 0.4px;
    word-spacing: -4px;
}

.format-cells {
    display: flex;
    margin-left: 4px;
}

.format-cells span {
    display: flex;
    justify-content: center;
    width: 68px;
}

.inked {
    position: relative;
}

.inked::after {
    content: "";
    position: absolute;
    top: 41px;
    left: 16px;
    width: 36px;
    height: 8px;
    background: #3a414a;
}

.shape-tools {
    position: relative;
    width: 1114px;
    padding-left: 18px;
    gap: 27px;
}

.shape-tools::after {
    content: "";
    position: absolute;
    top: 66px;
    left: 152px;
    width: 36px;
    height: 8px;
    background: #3a414a;
}

.line-select {
    width: 256px;
    margin-left: -10px;
}

.line-style {
    display: flex;
    align-items: center;
    gap: 13px;
    width: 119px;
    height: 44px;
    padding-left: 20px;
    border-right: 2px solid #979ea8;
}

.line-style i {
    width: 61px;
    height: 4px;
    background: #4c5358;
}

.line-width {
    display: flex;
    align-items: center;
    justify-content: space-between;
    flex: 1;
    padding: 0 16px 0 33px;
}

.elbow {
    margin: 0 -7px;
}

.ends-select {
    width: 288px;
}

.end-start,
.end-finish {
    display: flex;
    align-items: center;
    justify-content: space-between;
    height: 44px;
    padding: 0 16px;
}

.end-start {
    width: 142px;
    padding-left: 16px;
    border-right: 2px solid #979ea8;
    letter-spacing: 0.5px;
}

.end-finish {
    flex: 1;
    padding-left: 24px;
}

.swap {
    margin-left: -7px;
}

.link-tools {
    gap: 37px;
    padding-left: 22px;
    border: none;
}

.more {
    display: flex;
    flex-direction: column;
    align-items: center;
    gap: 21px;
    width: 64px;
    margin: 22px 29px 0 95px;
    font-size: 20px;
    letter-spacing: 0.4px;
}

/* Side rail and shape panel */
.workspace {
    display: flex;
    flex: 1;
    min-height: 0;
}

.rail {
    display: flex;
    flex-direction: column;
    align-items: center;
    gap: 8px;
    width: 82px;
    padding: 8px 0;
    border-right: 2px solid #dde1e6;
}

.rail span {
    display: grid;
    place-items: center;
    width: 64px;
    height: 64px;
    border-radius: 8px;
}

.rail .active {
    background: #dedeff;
}

.rail .active svg,
.search {
    stroke: #3c40c0;
}

.panel {
    display: flex;
    flex-direction: column;
    width: 430px;
    border-right: 2px solid #dde1e6;
}

.panel-head {
    display: flex;
    align-items: center;
    justify-content: space-between;
    height: 80px;
    padding: 2px 36px 0 32px;
    border-bottom: 2px solid #dde1e6;
}

.panel-head h2 {
    padding-top: 1px;
    font-size: 35px;
    letter-spacing: 0.7px;
}

.scroll {
    position: relative;
    height: 1206px;
}

.scroll-thumb {
    position: absolute;
    top: 4px;
    right: 4px;
    width: 12px;
    height: 616px;
    border-radius: 6px;
    background: rgba(151, 158, 168, 0.5);
}

.lib {
    padding-top: 44px;
    border-bottom: 2px solid #cdd2d9;
}

.in-use {
    height: 348px;
}

.standard {
    height: 294px;
}

.flowchart {
    border: none;
}

.lib-head {
    display: flex;
    align-items: center;
    height: 40px;
    padding: 0 46px 0 17px;
}

.lib-head h3 {
    flex: 1;
    margin-left: 17px;
    font-size: 27px;
    letter-spacing: 0.7px;
    white-space: nowrap;
}

.trash {
    margin: 0 34px 0 16px;
}

.shape-grid {
    display: grid;
    grid-template-columns: 70px 74px 68px 74px 68px;
    grid-auto-rows: 70px;
    place-items: center;
    padding: 25px 0 0 37px;
}

.shape-grid svg {
    width: 52px;
    height: 52px;
    fill: none;
    stroke: #000;
    stroke-width: 2;
}

.shape-grid.used svg,
.shape-grid .stacked {
    stroke: #33383f;
}

.diagram-key {
    display: block;
    width: 437px;
    height: 42px;
    line-height: 42px;
    color: #1473eb;
    text-align: center;
    letter-spacing: 1.3px;
}

.more-shapes {
    display: flex;
    flex-direction: column;
    align-items: center;
    height: 146px;
    padding-top: 24px;
    border-top: 2px solid #dde1e6;
}

.more-shapes svg {
    margin-left: 8px;
}

.more-shapes button {
    width: 336px;
    height: 64px;
    margin-top: -2px;
    border-radius: 8px;
    background: #3c40c0;
    color: #fff;
    font-weight: 600;
}

.import {
    display: flex;
    align-items: center;
    gap: 19px;
    flex: 1;
    padding: 2px 0 0 98px;
    border-top: 2px solid #dde1e6;
    font-size: 30px;
    font-weight: 300;
    letter-spacing: 1.6px;
}

.import span {
    padding-top: 4px;
}

/* Canvas: minor grid every 24.265px, major every fourth line */
.canvas {
    position: relative;
    flex: 1;
    background:
        repeating-linear-gradient(90deg, transparent 0 66.1px, #dddddd 66.1px 67.1px, transparent 67.1px 97.06px),
        repeating-linear-gradient(180deg, transparent 0 26.6px, #dddddd 26.6px 27.6px, transparent 27.6px 97.06px),
        repeating-linear-gradient(90deg, transparent 0 17.57px, #eeeeee 17.57px 18.57px, transparent 18.57px 24.265px),
        repeating-linear-gradient(180deg, transparent 0 2.34px, #eeeeee 2.34px 3.34px, transparent 3.34px 24.265px);
}

.diagram {
    letter-spacing: 0;
}

.edges {
    fill: none;
    stroke: #3a414a;
    stroke-width: 1.5;
}

.nodes {
    stroke: #3a414a;
    stroke-width: 1.5;
}

.labels {
    fill: #3a414a;
    fill-opacity: 0.9;
    font-family: "Liberation Sans", Arial, sans-serif;
    font-size: 26.96px;
    text-anchor: middle;
}

.labels .small {
    font-size: 21.57px;
}

.labels .medium {
    font-size: 24.2px;
}

.labels .heading {
    font-size: 53.9px;
    font-weight: bold;
}

.labels .legend {
    font-weight: bold;
}

.thumb-v,
.thumb-h {
    position: absolute;
    border: 2px solid rgba(255, 255, 255, 0.5);
    border-radius: 8px;
    background: rgba(151, 158, 168, 0.5);
}

.thumb-v {
    top: 526px;
    right: 2px;
    width: 16px;
    height: 474px;
}

.thumb-h {
    left: 846px;
    bottom: 2px;
    width: 723px;
    height: 16px;
}

/* Footer */
.footer {
    display: flex;
    align-items: center;
    height: 66px;
    flex: none;
    padding-left: 26px;
    border-top: 2px solid #dde1e6;
    background: #fafbfd;
}

.tiles {
    margin: 0 36px;
}

.page-tab {
    display: flex;
    align-items: center;
    justify-content: space-between;
    align-self: flex-start;
    width: 170px;
    height: 56px;
    margin-right: 28px;
    padding: 4px 17px 0 16px;
    border-radius: 0 0 8px 8px;
    background: #6f7681;
    color: #fff;
}

.page-tab svg {
    margin-top: -8px;
}

.status-bar {
    display: flex;
    align-items: center;
    width: 848px;
    height: 100%;
    margin-left: auto;
}

.status-bar > div {
    display: flex;
    align-items: center;
    height: 100%;
    border-left: 2px solid #dde1e6;
}

.selected {
    width: 396px;
    padding-left: 22px;
}

.selected span {
    width: 233px;
    margin-left: 11px;
    font-size: 27px;
    letter-spacing: 0.8px;
    white-space: nowrap;
}

.selected em {
    width: 32px;
    height: 32px;
    margin-right: 17px;
    border-radius: 50%;
    background: #dedeff;
    color: #3c40c0;
    font-size: 22px;
    font-style: normal;
    font-weight: 600;
    letter-spacing: 0;
    line-height: 33px;
    text-align: center;
}

.cell {
    width: 66px;
    justify-content: center;
}

.zoom {
    width: 238px;
    padding: 0 17px 0 18px;
    justify-content: space-between;
}

.zoom span {
    padding-top: 3px;
}

.status-bar > .zoom {
    border-right: 2px solid #dde1e6;
    margin-right: 22px;
}
```
